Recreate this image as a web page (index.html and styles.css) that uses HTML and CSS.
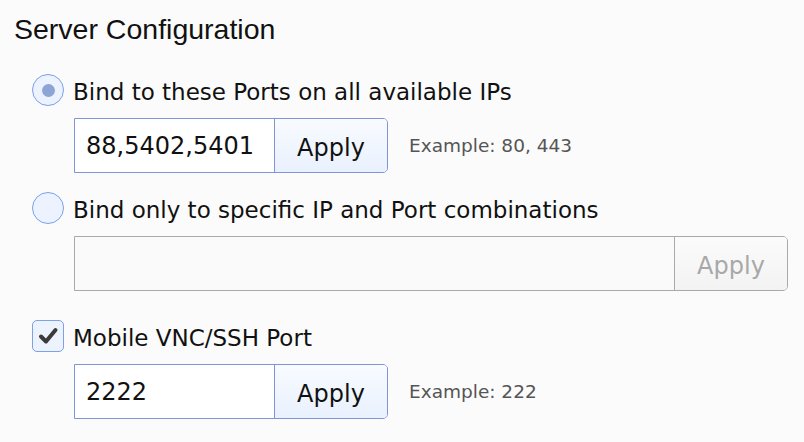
FILE: index.html
```html
<!DOCTYPE html>
<html>
<head>
<meta charset="utf-8">
<link rel="stylesheet" href="styles.css">
</head>
<body>
<div class="panel">
  <h1 class="title">Server Configuration</h1>
  <div class="options">
    <div class="option-row">
      <span class="radio checked"><span class="dot"></span></span>
      <span class="label">Bind to these Ports on all available IPs</span>
    </div>
    <div class="field-row gap-a">
      <div class="combo">
        <input class="field" type="text" value="88,5402,5401">
        <button class="btn">Apply</button>
      </div>
      <span class="hint">Example: 80, 443</span>
    </div>
    <div class="option-row gap-b">
      <span class="radio"></span>
      <span class="label">Bind only to specific IP and Port combinations</span>
    </div>
    <div class="field-row gap-a">
      <div class="combo wide disabled">
        <input class="field" type="text" value="" disabled>
        <button class="btn" disabled>Apply</button>
      </div>
    </div>
    <div class="option-row gap-c">
      <span class="check">
        <svg width="22" height="20" viewBox="0 0 22 20"><path d="M4 10.5 L9 15.5 L18.5 4" fill="none" stroke="#3a3a3a" stroke-width="4" stroke-linecap="round" stroke-linejoin="round"/></svg>
      </span>
      <span class="label">Mobile VNC/SSH Port</span>
    </div>
    <div class="field-row gap-a">
      <div class="combo">
        <input class="field" type="text" value="2222">
        <button class="btn">Apply</button>
      </div>
      <span class="hint">Example: 222</span>
    </div>
  </div>
</div>
</body>
</html>
```

FILE: styles.css
```css
html, body {
  margin: 0;
  padding: 0;
  background: #fbfbfb;
}
.panel {
  padding: 12px 0 0 14px;
  font-family: "DejaVu Sans", sans-serif;
  color: #111;
}
.title {
  margin: 0;
  font-family: "Liberation Sans", Arial, sans-serif;
  font-weight: normal;
  font-size: 28.5px;
  line-height: 34px;
  color: #111;
}
.options {
  margin-top: 28px;
  padding-left: 18px;
  display: flex;
  flex-direction: column;
}
.option-row {
  display: flex;
  align-items: center;
  height: 32px;
}
.gap-a { margin-top: 12px; }
.gap-b { margin-top: 19px; }
.gap-c { margin-top: 29px; }
.radio {
  box-sizing: border-box;
  width: 32px;
  height: 32px;
  border-radius: 50%;
  border: 1.5px solid #7aa0ee;
  background: #edf3fe;
  display: flex;
  align-items: center;
  justify-content: center;
  flex: none;
}
.dot {
  width: 13px;
  height: 13px;
  border-radius: 50%;
  background: #8ca5d4;
}
.check {
  box-sizing: border-box;
  width: 32px;
  height: 32px;
  border-radius: 5px;
  border: 1.5px solid #7aa0ee;
  background: #edf3fe;
  display: flex;
  align-items: center;
  justify-content: center;
  flex: none;
}
.check svg { display: block; }
.label {
  margin-left: 9px;
  padding-top: 4px;
  font-size: 23px;
  color: #111;
  white-space: nowrap;
}
.field-row {
  display: flex;
  align-items: center;
  padding-left: 42px;
}
.combo {
  display: flex;
  height: 55px;
  box-sizing: border-box;
  border: 1px solid #7f95d6;
  border-radius: 0 5px 5px 0;
  overflow: hidden;
  width: 314px;
}
.combo.wide { width: 714px; }
.combo.disabled { border-color: #a9a9a9; }
.field {
  flex: 1;
  min-width: 0;
  border: none;
  outline: none;
  background: #fff;
  font-family: "DejaVu Sans", sans-serif;
  font-size: 24px;
  color: #111;
  padding: 0 0 0 11px;
  margin: 0;
}
.disabled .field { background: #fafafa; }
.btn {
  width: 113px;
  flex: none;
  border: none;
  border-left: 1px solid #7f95d6;
  background: linear-gradient(#f8fbff, #e9f1fe);
  font-family: "DejaVu Sans", sans-serif;
  font-size: 24px;
  color: #111;
  padding: 5px 0 0 0;
  margin: 0;
}
.disabled .btn {
  border-left-color: #a9a9a9;
  background: linear-gradient(#fbfbfb, #f3f3f3);
  color: #a8a8a8;
}
.hint {
  margin-left: 21px;
  font-size: 18.5px;
  color: #555;
}
```
